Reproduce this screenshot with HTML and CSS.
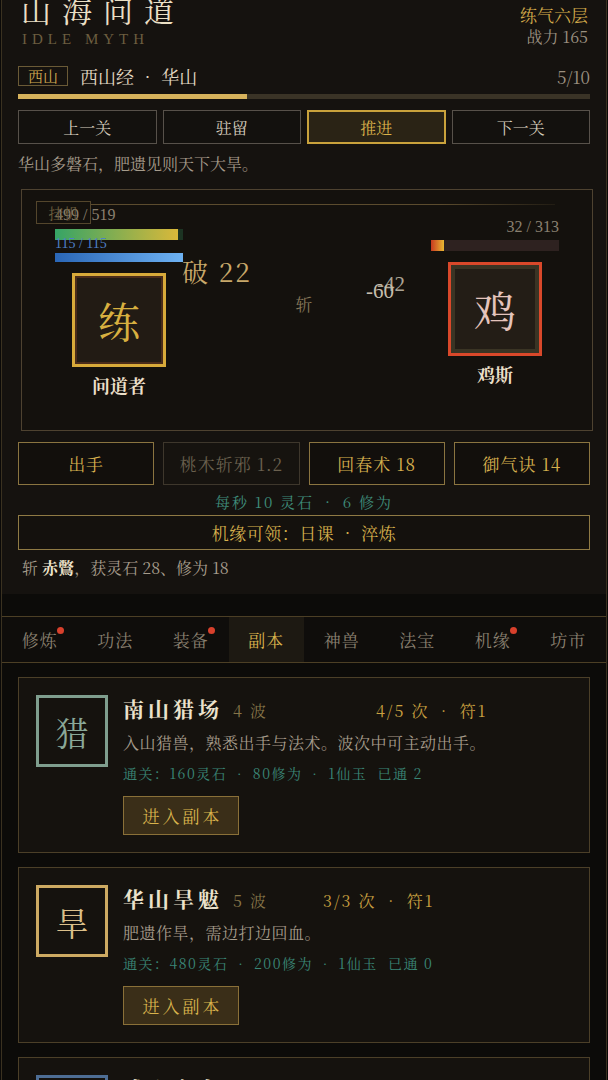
FILE: index.html
```html
<!DOCTYPE html>
<html lang="zh">
<head>
<meta charset="utf-8">
<title>山海问道</title>
<link rel="stylesheet" href="styles.css">
</head>
<body>
<div class="app">
  <section class="top">
    <header class="head">
      <div class="brand">
        <h1 class="title">山海问道</h1>
        <div class="sub">IDLE MYTH</div>
      </div>
      <div class="realm">
        <div class="realm-name">练气六层</div>
        <div class="power">战力 165</div>
      </div>
    </header>

    <div class="stage-row">
      <span class="tag">西山</span>
      <span class="stage-name">西山经 • 华山</span>
      <span class="stage-count">5/10</span>
    </div>
    <div class="progress"><div class="progress-fill" style="width:40%"></div></div>

    <div class="nav-btns">
      <button class="nav-btn">上一关</button>
      <button class="nav-btn">驻留</button>
      <button class="nav-btn active">推进</button>
      <button class="nav-btn">下一关</button>
    </div>

    <p class="lore">华山多磐石，肥遗见则天下大旱。</p>

    <div class="battle">
      <span class="idle-tag">挂机</span>
      <span class="battle-line"></span>

      <div class="fighter player">
        <div class="hp-label">499 / 519</div>
        <div class="bar hp-bar"><div class="fill hp-fill" style="width:96%"></div></div>
        <div class="mp-label">115 / 115</div>
        <div class="bar mp-bar"><div class="fill mp-fill" style="width:100%"></div></div>
        <div class="avatar avatar-player"><span>练</span></div>
        <div class="fighter-name">问道者</div>
      </div>

      <div class="mid">斩</div>

      <div class="fighter enemy">
        <div class="hp-label right">32 / 313</div>
        <div class="bar enemy-bar"><div class="fill enemy-fill" style="width:10%"></div></div>
        <div class="avatar avatar-enemy"><span>鸡</span></div>
        <div class="fighter-name">鸡斯</div>
      </div>

      <span class="float crit">破 22</span>
      <span class="float dmg dmg-a">-60</span>
      <span class="float dmg dmg-b">-42</span>
    </div>

    <div class="actions">
      <button class="act">出手</button>
      <button class="act disabled">桃木斩邪 1.2</button>
      <button class="act">回春术 18</button>
      <button class="act">御气诀 14</button>
    </div>

    <div class="rate">每秒 10 灵石 • 6 修为</div>

    <div class="opp">机缘可领：日课 • 淬炼</div>

    <p class="log">斩 <b>赤鷩</b>，获灵石 28、修为 18</p>
  </section>

  <nav class="tabs">
    <div class="tab">修炼<span class="dot"></span></div>
    <div class="tab">功法</div>
    <div class="tab">装备<span class="dot"></span></div>
    <div class="tab active">副本</div>
    <div class="tab">神兽</div>
    <div class="tab">法宝</div>
    <div class="tab">机缘<span class="dot"></span></div>
    <div class="tab">坊市</div>
  </nav>

  <section class="list">
    <div class="card">
      <div class="icon icon-green">猎</div>
      <div class="card-body">
        <div class="card-title">
          <span class="name">南山猎场</span>
          <span class="waves">4 波</span>
          <span class="count count-far">4/5 次 • 符1</span>
        </div>
        <div class="desc">入山猎兽，熟悉出手与法术。波次中可主动出手。</div>
        <div class="reward">通关：160灵石 • 80修为 • 1仙玉&nbsp; 已通 2</div>
        <button class="enter">进入副本</button>
      </div>
    </div>

    <div class="card">
      <div class="icon icon-gold">旱</div>
      <div class="card-body">
        <div class="card-title">
          <span class="name">华山旱魃</span>
          <span class="waves">5 波</span>
          <span class="count count-near">3/3 次 • 符1</span>
        </div>
        <div class="desc">肥遗作旱，需边打边回血。</div>
        <div class="reward">通关：480灵石 • 200修为 • 1仙玉&nbsp; 已通 0</div>
        <button class="enter">进入副本</button>
      </div>
    </div>

    <div class="card">
      <div class="icon icon-blue">玄</div>
      <div class="card-body">
        <div class="card-title">
          <span class="name">成山玄鸟</span>
          <span class="waves">6 波</span>
        </div>
        <div class="desc">玄鸟栖于成山，羽落如刃。</div>
        <div class="reward">通关：900灵石 • 360修为 • 2仙玉&nbsp; 已通 0</div>
        <button class="enter">进入副本</button>
      </div>
    </div>
  </section>
</div>
</body>
</html>
```

FILE: styles.css
```css
* { box-sizing: border-box; }

html, body {
  margin: 0;
  padding: 0;
  background: #0a0908;
}

body {
  font-family: "Noto Serif CJK SC", "Liberation Serif", "Noto Sans CJK SC", serif;
  color: #e2d8c2;
}

button {
  font-family: inherit;
  cursor: pointer;
  padding: 0;
  margin: 0;
}

.app {
  margin: 0 1px;
  border-left: 1px solid #3a3120;
  border-right: 1px solid #3a3120;
  min-height: 1080px;
  background: #0c0b09;
  overflow: hidden;
}

/* ---------- top section ---------- */
.top {
  background: #15120f;
  padding: 0 16px 15px;
}

.head {
  display: flex;
  justify-content: space-between;
  align-items: flex-start;
  height: 47px;
}

.brand {
  display: flex;
  flex-direction: column;
}

.title {
  margin: -6px 0 0 3px;
  font-size: 30px;
  line-height: 30px;
  font-weight: normal;
  letter-spacing: 11px;
  color: #eadfc4;
}

.sub {
  margin: 8px 0 0 4px;
  font-family: "Liberation Serif", serif;
  font-size: 15px;
  line-height: 15px;
  letter-spacing: 5px;
  color: #6c5e40;
}

.realm {
  text-align: right;
  padding-top: 5px;
  padding-right: 2px;
}

.realm-name {
  font-size: 17px;
  line-height: 20px;
  color: #d2a94a;
}

.power {
  margin-top: 2px;
  font-size: 16px;
  line-height: 20px;
  color: #9b9080;
}

.stage-row {
  display: flex;
  align-items: center;
  margin-top: 17px;
  height: 24px;
}

.tag {
  border: 1px solid #6a5a36;
  color: #d0a850;
  font-size: 15px;
  line-height: 18px;
  padding: 0 9px;
}

.stage-name {
  margin-left: 12px;
  font-size: 18px;
  color: #e2d8c2;
}

.stage-count {
  margin-left: auto;
  font-size: 17px;
  color: #9b9080;
}

.progress {
  margin-top: 6px;
  height: 5px;
  background: #3a3326;
}

.progress-fill {
  height: 100%;
  background: #d6b25c;
}

.nav-btns {
  display: grid;
  grid-template-columns: repeat(4, 1fr);
  gap: 6px;
  margin-top: 11px;
}

.nav-btn {
  height: 34px;
  border: 1px solid #57514a;
  background: #13110e;
  color: #d6cdbd;
  font-size: 16px;
}

.nav-btn.active {
  border: 2px solid #c9a23c;
  background: #2a2315;
  color: #dcb24a;
}

.lore {
  margin: 9px 0 0;
  font-size: 16px;
  line-height: 22px;
  color: #a69c8c;
}

/* ---------- battle ---------- */
.battle {
  position: relative;
  margin: 14px -3px 0 3px;
  height: 242px;
  border: 1px solid #4e4230;
  background: #14110d;
  display: flex;
  align-items: center;
  justify-content: space-between;
  padding: 16px 33px 34px;
}

.idle-tag {
  position: absolute;
  left: 14px;
  top: 11px;
  width: 55px;
  height: 23px;
  border: 1px solid #54462c;
  color: #6d5e3e;
  font-size: 15px;
  line-height: 21px;
  text-align: center;
}

.battle-line {
  position: absolute;
  top: 14px;
  left: 69px;
  right: 37px;
  height: 1px;
  background: linear-gradient(90deg, #5c4c2e 0%, #5c4c2e 75%, rgba(92, 76, 46, 0.2) 100%);
}

.fighter {
  width: 128px;
  display: flex;
  flex-direction: column;
  align-items: center;
}

.hp-label {
  align-self: stretch;
  font-family: "Liberation Serif", serif;
  font-size: 16px;
  line-height: 18px;
  color: #8a8070;
}

.hp-label.right {
  text-align: right;
}

.bar {
  align-self: stretch;
  position: relative;
}

.fill {
  height: 100%;
}

.hp-bar {
  margin-top: 5px;
  height: 11px;
  background: #1c3322;
}

.hp-fill {
  background: linear-gradient(90deg, #35a466, #d9b83a);
}

.mp-label {
  align-self: stretch;
  position: relative;
  margin-top: -3px;
  font-family: "Liberation Serif", serif;
  font-size: 14px;
  line-height: 14px;
  color: #4f80c8;
}

.mp-bar {
  margin-top: 2px;
  height: 9px;
  background: #1a2a40;
}

.mp-fill {
  background: linear-gradient(90deg, #2a66b6, #6eb2f2);
}

.enemy-bar {
  margin-top: 4px;
  height: 11px;
  background: #2e2220;
}

.enemy-fill {
  background: linear-gradient(90deg, #c83a20, #eab832);
}

.avatar {
  width: 94px;
  height: 94px;
  border: 3px solid #d8aa3a;
  background: #221b14;
  display: flex;
  align-items: center;
  justify-content: center;
  font-size: 42px;
  margin-top: 11px;
}

.avatar-player {
  color: #d8b040;
  box-shadow: inset 0 0 0 2px #4a2c1a;
}

.avatar-enemy {
  border-color: #d9482a;
  color: #e4c4bc;
  background: #231d16;
  box-shadow: inset 0 0 0 4px #3a3424;
}

.fighter-name {
  margin-top: 7px;
  font-size: 18px;
  line-height: 22px;
  font-weight: bold;
  color: #ebdfc8;
}

.mid {
  font-size: 17px;
  color: #857658;
  margin: 4px 6px 0 0;
}

.float {
  position: absolute;
  line-height: 1;
  white-space: nowrap;
}

.crit {
  left: 160px;
  top: 68px;
  font-size: 26px;
  letter-spacing: 2px;
  color: #c8a86a;
}

.dmg {
  font-family: "Liberation Serif", serif;
  font-size: 21px;
  color: #c6beac;
}

.dmg-a {
  left: 344px;
  top: 91px;
}

.dmg-b {
  left: 355px;
  top: 84px;
  opacity: 0.85;
}

/* ---------- actions ---------- */
.actions {
  display: grid;
  grid-template-columns: repeat(4, 1fr);
  gap: 9px;
  margin-top: 11px;
}

.act {
  height: 43px;
  border: 1px solid #8a7440;
  background: #120f0c;
  color: #d6b04e;
  font-size: 17px;
  letter-spacing: 1px;
}

.act.disabled {
  border-color: #3e372c;
  background: #16130f;
  color: #6a604e;
}

.rate {
  margin-top: 7px;
  text-align: center;
  font-size: 15px;
  line-height: 20px;
  letter-spacing: 2px;
  color: #3f8c7a;
}

.opp {
  margin-top: 3px;
  height: 35px;
  border: 1px solid #8f7a44;
  background: #14110d;
  color: #d6b04c;
  font-size: 17px;
  letter-spacing: 0.5px;
  display: flex;
  align-items: center;
  justify-content: center;
}

.log {
  margin: 7px 0 0;
  padding-left: 4px;
  font-size: 16px;
  line-height: 22px;
  color: #a69c8c;
}

.log b {
  color: #efe4cc;
}

/* ---------- tabs ---------- */
.tabs {
  margin-top: 22px;
  display: grid;
  grid-template-columns: repeat(8, 1fr);
  height: 47px;
  border-top: 1px solid #4c3f25;
  border-bottom: 1px solid #4c3f25;
  background: #0f0d0b;
}

.tab {
  position: relative;
  display: flex;
  align-items: center;
  justify-content: center;
  font-size: 17px;
  letter-spacing: 1px;
  color: #8a8070;
}

.tab.active {
  background: #1d1912;
  color: #d6b04c;
}

.dot {
  position: absolute;
  top: 10px;
  left: calc(50% + 17px);
  width: 7px;
  height: 7px;
  border-radius: 50%;
  background: #d8402c;
}

/* ---------- dungeon list ---------- */
.list {
  padding: 14px 16px;
  display: flex;
  flex-direction: column;
  gap: 14px;
}

.card {
  height: 176px;
  flex-shrink: 0;
  border: 1px solid #4b3f28;
  background: #15120e;
  padding: 17px;
  display: flex;
  gap: 15px;
}

.icon {
  width: 72px;
  height: 72px;
  flex-shrink: 0;
  border: 3px solid #7f9e8e;
  display: flex;
  align-items: center;
  justify-content: center;
  font-size: 33px;
}

.icon-green {
  border-color: #7f9e8e;
  color: #8aa898;
}

.icon-gold {
  border-color: #cdaa62;
  color: #dcc08a;
}

.icon-blue {
  border-color: #4d6d94;
  color: #7a9ac0;
}

.card-body {
  display: flex;
  flex-direction: column;
  align-items: flex-start;
}

.card-title {
  display: flex;
  align-items: baseline;
  line-height: 26px;
}

.name {
  font-size: 21px;
  font-weight: bold;
  letter-spacing: 4px;
  color: #ece2cc;
}

.waves {
  margin-left: 10px;
  font-size: 16px;
  letter-spacing: 2px;
  color: #857448;
}

.count {
  font-size: 16px;
  letter-spacing: 2px;
  color: #c9a040;
}

.count-far {
  margin-left: 108px;
}

.count-near {
  margin-left: 55px;
}

.desc {
  margin-top: 8px;
  font-size: 16px;
  line-height: 22px;
  letter-spacing: 0.5px;
  color: #a69c8c;
}

.reward {
  margin-top: 9px;
  font-size: 14px;
  line-height: 20px;
  letter-spacing: 1.5px;
  color: #3a8676;
}

.enter {
  margin-top: 13px;
  width: 116px;
  height: 42px;
  border: 1px solid #8a7038;
  background: #3a2e18;
  color: #d8b24c;
  font-size: 17px;
  letter-spacing: 3px;
  padding-left: 3px;
}
```
